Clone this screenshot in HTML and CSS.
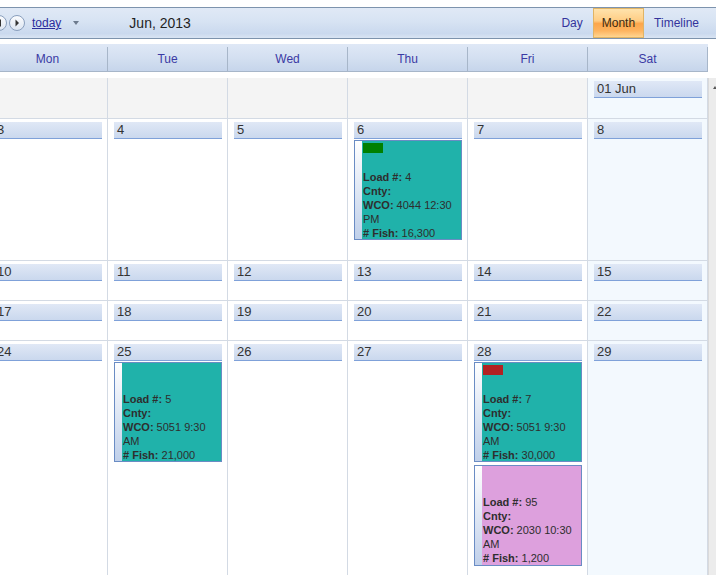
FILE: index.html
```html
<!DOCTYPE html>
<html>
<head>
<meta charset="utf-8">
<link rel="stylesheet" href="styles.css">
</head>
<body>
<div class="page">
  <div class="toolbar">
    <div class="nav">
      <span class="circ"><svg width="6" height="8" viewBox="0 0 6 8"><path d="M5 0 L1 4 L5 8Z" fill="#333"/></svg></span>
      <span class="circ"><svg width="6" height="8" viewBox="0 0 6 8"><path d="M1.5 0.5 L5 4 L1.5 7.5Z" fill="#333"/></svg></span>
      <a class="today" href="#">today</a>
      <span class="dd"></span>
    </div>
    <div class="title">Jun, 2013</div>
    <div class="views">
      <span class="view">Day</span>
      <span class="view active">Month</span>
      <span class="view">Timeline</span>
    </div>
  </div>

  <div class="head">
    <div class="hcell">Mon</div>
    <div class="hcell">Tue</div>
    <div class="hcell">Wed</div>
    <div class="hcell">Thu</div>
    <div class="hcell">Fri</div>
    <div class="hcell">Sat</div>
  </div>

  <div class="body">
    <div class="grid">
      <div class="cell prev"></div>
      <div class="cell prev"></div>
      <div class="cell prev"></div>
      <div class="cell prev"></div>
      <div class="cell prev"></div>
      <div class="cell wknd"><div class="bar">01 Jun</div></div>

      <div class="cell"><div class="bar">3</div></div>
      <div class="cell"><div class="bar">4</div></div>
      <div class="cell"><div class="bar">5</div></div>
      <div class="cell"><div class="bar">6</div>
        <div class="ev teal"><div class="strip"></div><div class="txt">
          <div class="tag green"></div>
          <div><b>Load #:</b> 4</div>
          <div><b>Cnty:</b></div>
          <div><b>WCO:</b> 4044 12:30 PM</div>
          <div><b># Fish:</b> 16,300</div>
        </div></div>
      </div>
      <div class="cell"><div class="bar">7</div></div>
      <div class="cell wknd"><div class="bar">8</div></div>

      <div class="cell"><div class="bar">10</div></div>
      <div class="cell"><div class="bar">11</div></div>
      <div class="cell"><div class="bar">12</div></div>
      <div class="cell"><div class="bar">13</div></div>
      <div class="cell"><div class="bar">14</div></div>
      <div class="cell wknd"><div class="bar">15</div></div>

      <div class="cell"><div class="bar">17</div></div>
      <div class="cell"><div class="bar">18</div></div>
      <div class="cell"><div class="bar">19</div></div>
      <div class="cell"><div class="bar">20</div></div>
      <div class="cell"><div class="bar">21</div></div>
      <div class="cell wknd"><div class="bar">22</div></div>

      <div class="cell"><div class="bar">24</div></div>
      <div class="cell"><div class="bar">25</div>
        <div class="ev teal"><div class="strip"></div><div class="txt">
          <div class="tag"></div>
          <div><b>Load #:</b> 5</div>
          <div><b>Cnty:</b></div>
          <div><b>WCO:</b> 5051 9:30 AM</div>
          <div><b># Fish:</b> 21,000</div>
        </div></div>
      </div>
      <div class="cell"><div class="bar">26</div></div>
      <div class="cell"><div class="bar">27</div></div>
      <div class="cell"><div class="bar">28</div>
        <div class="ev teal"><div class="strip"></div><div class="txt">
          <div class="tag red"></div>
          <div><b>Load #:</b> 7</div>
          <div><b>Cnty:</b></div>
          <div><b>WCO:</b> 5051 9:30 AM</div>
          <div><b># Fish:</b> 30,000</div>
        </div></div>
        <div class="ev plum"><div class="strip"></div><div class="txt">
          <div class="tag"></div>
          <div><b>Load #:</b> 95</div>
          <div><b>Cnty:</b></div>
          <div><b>WCO:</b> 2030 10:30 AM</div>
          <div><b># Fish:</b> 1,200</div>
        </div></div>
      </div>
      <div class="cell wknd"><div class="bar">29</div></div>
    </div>
    <div class="scroll"><span class="up"></span></div>
  </div>
</div>
</body>
</html>
```

FILE: styles.css
```css
html, body {
  margin: 0;
  padding: 0;
  background: #ffffff;
}
body {
  font-family: "Liberation Sans", Arial, sans-serif;
  width: 716px;
  height: 575px;
  overflow: hidden;
}
.page {
  width: 716px;
  height: 575px;
  overflow: hidden;
  padding-top: 7px;
  box-sizing: border-box;
}

/* toolbar */
.toolbar {
  display: flex;
  align-items: center;
  height: 32px;
  box-sizing: border-box;
  border-top: 1px solid #7d93ad;
  border-bottom: 1px solid #7d93ad;
  background: linear-gradient(#e0e9f6 0%, #d7e3f3 45%, #cad9ee 85%, #d9e4f3 100%);
  padding-right: 7px;
}
.nav {
  display: flex;
  align-items: center;
  margin-left: -9px;
}
.circ {
  width: 16px;
  height: 16px;
  box-sizing: border-box;
  border-radius: 50%;
  border: 1px solid #8a9fbd;
  background: linear-gradient(#fbfcfe, #dce5f1);
  display: flex;
  align-items: center;
  justify-content: center;
}
.circ + .circ {
  margin-left: 2px;
}
.today {
  margin-left: 7px;
  font-size: 12px;
  color: #2c2c9c;
  text-decoration: underline;
}
.dd {
  margin-left: 12px;
  width: 0;
  height: 0;
  border-left: 3.5px solid transparent;
  border-right: 3.5px solid transparent;
  border-top: 4px solid #6d7b8e;
}
.title {
  margin-left: 50px;
  font-size: 14px;
  color: #1f1f1f;
}
.views {
  margin-left: auto;
  display: flex;
  align-self: stretch;
}
.view {
  display: flex;
  align-items: center;
  padding: 0 10px;
  font-size: 12px;
  color: #33339c;
}
.view.active {
  padding: 0 8px;
  border: 1px solid #e0b465;
  color: #3b2a12;
  background: linear-gradient(#ffe3ad 0%, #ffcd84 42%, #fca64c 52%, #fdb460 78%, #ffd590 100%);
}

/* header */
.head {
  display: grid;
  grid-template-columns: repeat(6, 120px);
  margin: 5px 0 0 -12px;
  width: 720px;
  height: 28px;
  box-sizing: border-box;
  border-bottom: 1px solid #a7b6c9;
  background: linear-gradient(#dfe8f6 0%, #d4e0f1 50%, #c6d5eb 100%);
}
.hcell {
  margin-top: 3px;
  border-right: 1px solid #a7b6c9;
  display: flex;
  align-items: center;
  justify-content: center;
  font-size: 12px;
  color: #3a3aa4;
}

/* grid */
.body {
  display: flex;
  margin-top: 6px;
}
.grid {
  flex: none;
  display: grid;
  grid-template-columns: repeat(6, 120px);
  grid-template-rows: 41px 142px 40px 40px 240px;
  margin-left: -12px;
  width: 720px;
}
.cell {
  box-sizing: border-box;
  border-right: 1px solid #d3dae4;
  border-bottom: 1px solid #d3dae4;
  padding: 3px 5px 0 6px;
  overflow: hidden;
  background: #ffffff;
}
.cell.prev {
  background: #f4f4f4;
}
.cell.wknd {
  background: #f3f9fe;
}
.bar {
  height: 17px;
  box-sizing: border-box;
  border-bottom: 1px solid #7fa1d9;
  background: linear-gradient(#e0e8f6, #cad8ee);
  font-size: 13px;
  line-height: 16px;
  padding-left: 3px;
  color: #333333;
  white-space: nowrap;
}

/* events */
.ev {
  display: flex;
  height: 100px;
  box-sizing: border-box;
  margin-top: 1px;
  border: 1px solid #6a8cc4;
  overflow: hidden;
}
.ev + .ev {
  margin-top: 3px;
  height: 101px;
}
.ev.teal {
  background: #20b2aa;
}
.ev.plum {
  background: #dda0dd;
}
.strip {
  flex: none;
  width: 7px;
  background: linear-gradient(#ffffff, #c0d0ea);
}
.txt {
  flex: 1;
  min-width: 0;
  padding: 2px 0 0 1px;
  font-size: 11px;
  line-height: 14px;
  color: #2e2e2e;
}
.tag {
  width: 20px;
  height: 10px;
  margin-bottom: 17px;
}
.tag.green {
  background: #008000;
}
.tag.red {
  background: #b22222;
}

/* scrollbar */
.scroll {
  flex: none;
  width: 8px;
  height: 497px;
  box-sizing: border-box;
  border-left: 1px solid #dadada;
  background: #ececec;
  position: relative;
}
.up {
  position: absolute;
  left: 4px;
  top: 8px;
  width: 0;
  height: 0;
  border-left: 2.5px solid transparent;
  border-right: 2.5px solid transparent;
  border-bottom: 3px solid #555;
}
```
